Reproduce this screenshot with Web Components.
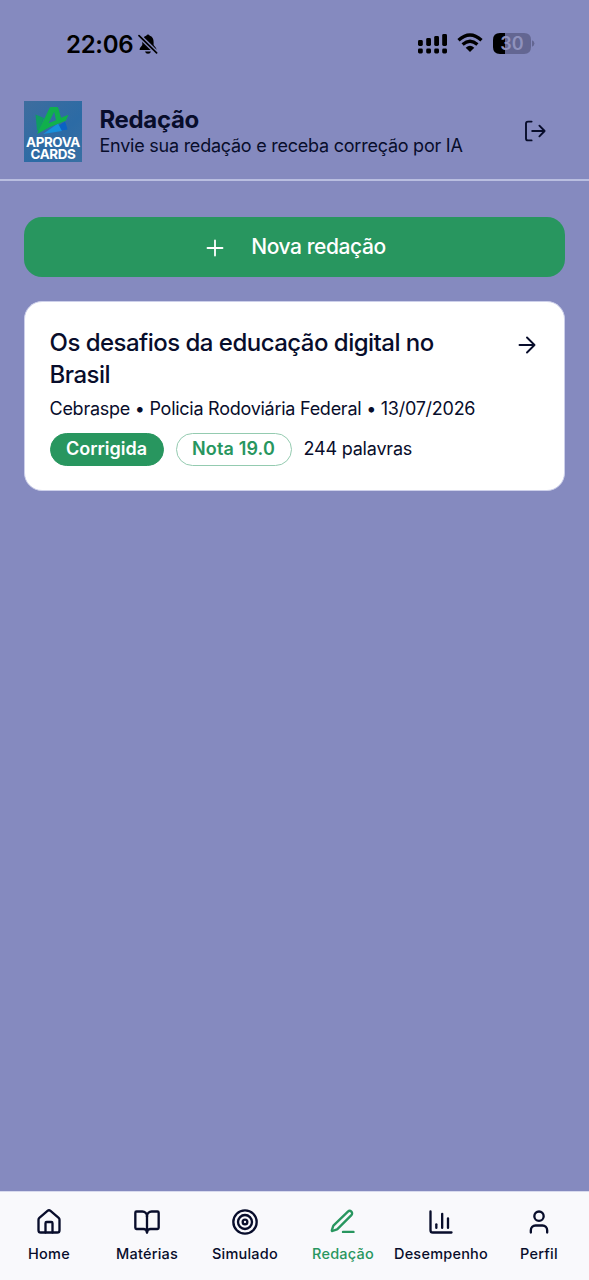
<!DOCTYPE html>
<html lang="pt-BR">
<head>
<meta charset="utf-8">
<title>Redação</title>
<style>
html,body{margin:0;height:100%}
body{font-family:Inter,"Liberation Sans",sans-serif;color:#080d2b;background:#858abf;overflow:hidden}
</style>
</head>
<body>
<redacao-app></redacao-app>
<script>
const define=(name,html)=>customElements.define(name,class extends HTMLElement{
  constructor(){super();this.attachShadow({mode:'open'}).innerHTML='<style>*{box-sizing:border-box}svg{display:block}</style>'+html;}
});

define('status-bar',`<style>
:host{display:flex;box-sizing:border-box;height:88px;padding:0 54px 0 66px;align-items:center;color:#000}
.time{font-size:24px;font-weight:570;letter-spacing:-.3px;line-height:30px;width:72px;white-space:nowrap;padding-top:1px}
.bat{width:42px;height:22px;margin-left:9px;position:relative}
.bat span{position:absolute;left:0;width:38px;top:0;line-height:21px;text-align:center;font-size:18px;font-weight:600;color:#8f92bd}
.right{margin-left:auto;display:flex;align-items:center}
</style>
<span class="time">22:06</span>
<svg width="20" height="22" viewBox="0 0 20 22"><path d="M2 17 Q1 17 2 15 L4.3 12 V9 Q4.3 4 8.2 2.8 Q10 0 11.8 2.8 Q15.6 4 15.6 9 V12 L18 15 Q19 17 18 17Z M7 18.5h6q-.6 2.3-3 2.3t-3-2.3Z" fill="#000"/><path d="M.2 1.8 19 20.2" stroke="#858abf" stroke-width="4.4"/><path d="M1 2.6 18.6 19.8" stroke="#000" stroke-width="1.7" stroke-linecap="round"/></svg>
<div class="right">
<svg width="30" height="21" viewBox="0 0 30 21" style="margin-top:-1px"><g fill="#000"><rect x="0" y="7" width="4.8" height="6" rx="1.4"/><rect x="8.2" y="5" width="4.8" height="8" rx="1.4"/><rect x="16.2" y="3" width="4.8" height="10" rx="1.4"/><rect x="24.2" y="1" width="4.8" height="12" rx="1.4"/><rect x="0" y="15.5" width="4.8" height="5" rx="1.4"/><rect x="8.2" y="15.5" width="4.8" height="5" rx="1.4"/><rect x="16.2" y="15.5" width="4.8" height="5" rx="1.4"/><rect x="24.2" y="15.5" width="4.8" height="5" rx="1.4"/></g></svg>
<svg width="26" height="20" viewBox="0 0 26 20" style="margin:-2px 1px 0 9px"><g fill="none" stroke="#000" stroke-width="3.3"><path d="M1.5 7.2Q13-3.3 24.5 7.2"/><path d="M5.6 11.4Q13 5 20.4 11.4"/></g><path d="M8.7 14.7Q13 11 17.3 14.7L13 19Z" fill="#000"/></svg>
<div class="bat"><svg width="42" height="22" viewBox="0 0 42 22"><path d="M12 0h19q7 0 7 7v7q0 7-7 7H12Z" fill="#636692"/><path d="M12 0H7Q0 0 0 7v7q0 7 7 7h5Z" fill="#000"/><path d="M39 7.2q2.4 1 2.4 3.3T39 13.8Z" fill="#636692"/></svg><span>30</span></div>
</div>`);

define('aprova-logo',`<style>
:host{display:flex;flex-direction:column;box-sizing:border-box;width:58px;height:61px;background:linear-gradient(135deg,#3e6d9e,#2c6ba5 60%,#3970a3);color:#fff;overflow:hidden}
svg{flex:none}
div{font-weight:700;text-align:center;line-height:12px;font-size:13.4px;letter-spacing:-.4px}
</style>
<svg width="58" height="35" viewBox="0 0 58 35"><path d="M25 31.5 41 20.5 43.5 28.5Z" fill="#0a62c4"/><path d="M19 33 34 22.5 38 30Z" fill="#1690dc"/><path d="M11.5 13.5 20 17 15.5 30 13 29Z" fill="#0f9d62"/><path fill-rule="evenodd" d="M13 33 25.5 7Q26 6 27 6H33Q34 6 34.3 7L37 16.8 44.5 13.8 41.8 19.8 26 26Z M24.5 22.3 32 19.2 30.2 10.8Z" fill="#10b04c"/></svg>
<div>APROVA<br>CARDS</div>`);

define('page-header',`<style>
:host{display:flex;box-sizing:border-box;height:93px;padding:13px 42px 18px 24px;align-items:center;border-bottom:2px solid #b9bee0}
.t{margin:2px 0 0 17.5px}
::slotted(h1){margin:0;font-size:24px;font-weight:700;line-height:28px;letter-spacing:-.35px}
::slotted(p){margin:0;font-size:18px;line-height:24px;white-space:nowrap;letter-spacing:-.24px}
svg{margin-left:auto}
</style>
<aprova-logo></aprova-logo><div class="t"><slot></slot></div>
<svg width="24" height="24" viewBox="0 0 24 24" fill="none" stroke="#080d2b" stroke-width="1.9" stroke-linecap="round" stroke-linejoin="round"><path d="M8.6 2.6H5q-2 0-2 2v14.8q0 2 2 2h3.6M9.2 12H21.6M16.4 6.7 21.6 12l-5.2 5.3"/></svg>`);

define('primary-button',`<style>
:host{display:block}
button{all:unset;box-sizing:border-box;width:100%;height:60px;border-radius:18px;background:#28965f;color:#fff;display:flex;align-items:center;justify-content:center;gap:26px;font-size:21px;font-weight:480;line-height:28px;letter-spacing:-.42px;padding:0 0 0 2px}
</style><button><svg width="20" height="20" viewBox="0 0 20 20" stroke="#fff" stroke-width="1.8" stroke-linecap="round" style="margin-top:2px"><path d="M10 2.5v15M2.5 10h15"/></svg><span><slot></slot></span></button>`);

define('tag-pill',`<style>
:host{display:flex;align-items:center;justify-content:center;box-sizing:border-box;height:33px;width:114px;border-radius:17px;border:1.5px solid #28965f;background:#28965f;color:#fff;font-size:18px;font-weight:600;line-height:22px;padding-bottom:1px;white-space:nowrap}
:host([outline]){width:116px;background:#fff;border-color:#94cbb0;color:#28965f;letter-spacing:.15px}
</style><slot></slot>`);

define('essay-card',`<style>
:host{display:block;box-sizing:border-box;height:190px;border:1.5px solid #cdd0ea;border-radius:18px;background:#fff;padding:24.5px 24px 0 24.5px}
.top{display:flex;justify-content:space-between}
.title{width:410px;font-size:24px;font-weight:480;line-height:32px;letter-spacing:-.52px}
svg{margin:8px 3px 0 0}
.meta{font-size:18px;line-height:24px;margin-top:6px;white-space:nowrap;letter-spacing:-.26px}
.row{display:flex;gap:12px;align-items:center;margin-top:12px;font-size:18px}
.words{padding-bottom:2px;white-space:nowrap;letter-spacing:-.2px}
</style>
<div class="top"><div class="title"><slot name="title"></slot></div>
<svg width="20" height="20" viewBox="0 0 20 20" fill="none" stroke="#080d2b" stroke-width="1.9" stroke-linecap="round" stroke-linejoin="round"><path d="M2.5 10h15M10 2.5l7.5 7.5-7.5 7.5"/></svg></div>
<div class="meta"><slot name="meta"></slot></div>
<div class="row"><tag-pill><slot name="status"></slot></tag-pill><tag-pill outline><slot name="grade"></slot></tag-pill><span class="words"><slot name="words"></slot></span></div>`);

const icons={
home:'<path d="M15 21v-8a1 1 0 0 0-1-1h-4a1 1 0 0 0-1 1v8"/><path d="M3 10a2 2 0 0 1 .709-1.528l7-5.999a2 2 0 0 1 2.582 0l7 5.999A2 2 0 0 1 21 10v9a2 2 0 0 1-2 2H5a2 2 0 0 1-2-2z"/>',
book:'<path d="M12 7v14"/><path d="M3 18a1 1 0 0 1-1-1V4a1 1 0 0 1 1-1h5a4 4 0 0 1 4 4 4 4 0 0 1 4-4h5a1 1 0 0 1 1 1v13a1 1 0 0 1-1 1h-6a3 3 0 0 0-3 3 3 3 0 0 0-3-3z"/>',
target:'<circle cx="12" cy="12" r="10"/><circle cx="12" cy="12" r="6"/><circle cx="12" cy="12" r="2"/>',
pen:'<path d="M12 20.5H21"/><path d="M16.2 3.1a2.1 2.1 0 0 1 3 3L7.2 18.1a2 2 0 0 1-.9.5l-3.3 1.1a.5.5 0 0 1-.6-.6l1.1-3.3a2 2 0 0 1 .5-.9Z"/>',
chart:'<path d="M3 3v16a2 2 0 0 0 2 2h16"/><path d="M18 17V9"/><path d="M13 17V5"/><path d="M8 17v-3"/>',
user:'<path d="M19 21v-2a4 4 0 0 0-4-4H9a4 4 0 0 0-4 4v2"/><circle cx="12" cy="7" r="4"/>'};
customElements.define('nav-item',class extends HTMLElement{
constructor(){super();this.attachShadow({mode:'open'}).innerHTML=`<style>
:host{display:flex;flex-direction:column;align-items:center;flex:1 1 0;min-width:0;font-size:14.5px;font-weight:490;line-height:20px;letter-spacing:.22px;white-space:nowrap}
:host([active]){color:#28965f}
svg{display:block;margin-bottom:8px}
</style><svg width="28" height="28" viewBox="0 0 24 24" fill="none" stroke="currentColor" stroke-width="2" stroke-linecap="round" stroke-linejoin="round">${icons[this.getAttribute('icon')]}</svg><span><slot></slot></span>`;}
});

define('bottom-nav',`<style>:host{display:flex;box-sizing:border-box;height:89px;border-top:1.5px solid #d8daee;background:#f9f9fc;padding:15.5px 1px 0 0}</style>
<nav-item icon="home">Home</nav-item><nav-item icon="book">Matérias</nav-item><nav-item icon="target">Simulado</nav-item><nav-item icon="pen" active>Redação</nav-item><nav-item icon="chart">Desempenho</nav-item><nav-item icon="user">Perfil</nav-item>`);

define('redacao-app',`<style>
:host{display:flex;flex-direction:column;height:1280px;width:589px}
main{flex:1;display:flex;flex-direction:column;gap:24px;padding:36px 24px 0}
</style>
<status-bar></status-bar>
<page-header><h1>Redação</h1><p>Envie sua redação e receba correção por IA</p></page-header>
<main><primary-button>Nova redação</primary-button>
<essay-card><span slot="title">Os desafios da educação digital no Brasil</span><span slot="meta">Cebraspe • Policia Rodoviária Federal • 13/07/2026</span><span slot="status">Corrigida</span><span slot="grade">Nota 19.0</span><span slot="words">244 palavras</span></essay-card></main>
<bottom-nav></bottom-nav>`);
</script>
</body>
</html>
